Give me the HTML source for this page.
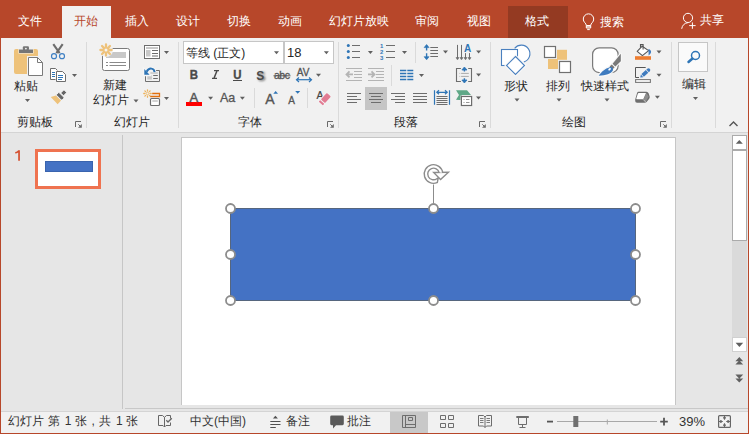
<!DOCTYPE html>
<html><head><meta charset="utf-8">
<style>
*{margin:0;padding:0;box-sizing:border-box}
html,body{width:749px;height:434px;overflow:hidden;background:#E6E6E6;font-family:"Liberation Sans",sans-serif;}
.a{position:absolute}
#top{left:0;top:0;width:749px;height:38px;background:#B7472A}
.tt{position:absolute;top:14px;font-size:12px;line-height:14px;color:#fff;white-space:nowrap}
#ribbon{left:1px;top:38px;width:747px;height:95px;background:#F1F1F1;border-bottom:1px solid #D4D4D4}
.sep{position:absolute;width:1px;background:#DADADA}
.lbl{position:absolute;top:116px;font-size:12px;line-height:13px;color:#262626;font-weight:500;white-space:nowrap}
.txt{position:absolute;font-size:12px;line-height:13px;color:#262626;font-weight:500;white-space:nowrap}
#pane{left:1px;top:133px;width:121px;height:278px;background:#E6E6E6}
#status{left:1px;top:411px;width:747px;height:22px;background:#F1F1F1;border-top:1px solid #D4D4D4}
.st{position:absolute;top:415px;font-size:12px;line-height:13px;color:#333;white-space:nowrap}
svg text{font-family:"Liberation Sans",sans-serif}
</style></head><body>
<div id="top" class="a"></div>
<div class="a" style="left:0;top:38px;width:1px;height:396px;background:#B7472A"></div>
<div class="a" style="left:748px;top:38px;width:1px;height:396px;background:#B7472A"></div>
<div class="a" style="left:0;top:433px;width:749px;height:1px;background:#B7472A"></div>

<div class="a" style="left:62px;top:6px;width:49px;height:32px;background:#F1F1F1"></div>
<div class="a" style="left:508px;top:6px;width:60px;height:32px;background:#943A22"></div>
<div class="tt" style="left:18px">文件</div>
<div class="tt" style="left:74px;color:#B7472A">开始</div>
<div class="tt" style="left:125px">插入</div>
<div class="tt" style="left:176px">设计</div>
<div class="tt" style="left:227px">切换</div>
<div class="tt" style="left:278px">动画</div>
<div class="tt" style="left:329px">幻灯片放映</div>
<div class="tt" style="left:415px">审阅</div>
<div class="tt" style="left:467px">视图</div>
<div class="tt" style="left:525px">格式</div>
<div class="tt" style="left:600px;top:15px">搜索</div>
<div class="tt" style="left:700px;top:13px;font-weight:500">共享</div>

<div id="ribbon" class="a"></div>
<div class="sep" style="left:86px;top:42px;height:86px"></div>
<div class="sep" style="left:178px;top:42px;height:86px"></div>
<div class="sep" style="left:338px;top:42px;height:86px"></div>
<div class="sep" style="left:490px;top:42px;height:86px"></div>
<div class="sep" style="left:671px;top:42px;height:86px"></div>
<div class="sep" style="left:715px;top:42px;height:86px"></div>
<div class="sep" style="left:254px;top:88px;height:20px"></div>
<div class="sep" style="left:307px;top:88px;height:20px"></div>
<div class="sep" style="left:415px;top:42px;height:21px"></div>
<div class="sep" style="left:391px;top:65px;height:21px"></div>

<div class="txt" style="left:14px;top:80px">粘贴</div>
<div class="lbl" style="left:17px">剪贴板</div>
<div class="txt" style="left:103px;top:79px">新建</div>
<div class="txt" style="left:93px;top:94px">幻灯片</div>
<div class="lbl" style="left:114px">幻灯片</div>
<div class="a" style="left:183px;top:41px;width:101px;height:23px;background:#fff;border:1px solid #C6C6C6"></div>
<div class="a" style="left:284px;top:41px;width:50px;height:23px;background:#fff;border:1px solid #C6C6C6"></div>
<div class="txt" style="left:186px;top:47px">等线 (正文)</div>
<div class="txt" style="left:287px;top:46px;font-size:13px;line-height:14px">18</div>
<div class="lbl" style="left:238px">字体</div>
<div class="lbl" style="left:394px">段落</div>
<div class="txt" style="left:504px;top:80px">形状</div>
<div class="txt" style="left:546px;top:80px">排列</div>
<div class="txt" style="left:581px;top:80px">快速样式</div>
<div class="lbl" style="left:562px">绘图</div>
<div class="a" style="left:678px;top:42px;width:30px;height:30px;background:#FAFAFA;border:1px solid #C6C6C6"></div>
<div class="txt" style="left:682px;top:78px">编辑</div>
<div class="a" style="left:365px;top:87px;width:22px;height:23px;background:#C5C5C5"></div>
<svg class="a" style="left:0;top:0" width="749" height="434" viewBox="0 0 749 434"><text x="316.5" y="98.6" font-size="10.5" fill="#444" stroke="#444" stroke-width="0.2">A</text></svg>
<svg class="a" style="left:0;top:0" width="749" height="434" viewBox="0 0 749 434"><rect x="14" y="49" width="24" height="25" rx="2" fill="#EEC27A"/>
<path d="M18.5,49 H33.5 V53.5 H18.5 Z" fill="#F4F4F4"/>
<path d="M19,49.5 H33 V53 H19 Z" fill="#767676"/>
<rect x="22.8" y="46.2" width="6.2" height="4" rx="1.2" fill="#767676"/>
<circle cx="25.9" cy="48.6" r="0.9" fill="#F4F4F4"/>
<path d="M27,56 H38.2 L43.5,61.3 V77 H27 Z" fill="#F1F1F1"/>
<path d="M28.5,57.5 H37.5 L42.5,62.5 V75.5 H28.5 Z" fill="#fff" stroke="#7A7A7A" stroke-width="1"/>
<path d="M37.5,57.5 V62.5 H42.5" fill="none" stroke="#7A7A7A" stroke-width="1"/>
<polygon points="25.0,99.0 30.0,99.0 27.5,102.0" fill="#606060"/>
<path d="M53.3,44.2 L59.6,53.2 M62.7,44.2 L56.4,53.2" stroke="#6D6D6D" stroke-width="2.1"/>
<circle cx="54" cy="56.2" r="2.5" fill="none" stroke="#3F80C4" stroke-width="1.2"/>
<circle cx="62" cy="56.2" r="2.5" fill="none" stroke="#3F80C4" stroke-width="1.2"/>
<path d="M50.5,68.5 H55.5 L57.5,70.5 V79.5 H50.5 Z" fill="#fff" stroke="#6D6D6D" stroke-width="1"/>
<path d="M52,72.5 H55 M52,74.5 H55 M52,76.5 H55" stroke="#2E75B6" stroke-width="1"/>
<path d="M55.5,70.5 H63 L66.5,74 V82.5 H55.5 Z" fill="#F1F1F1"/>
<path d="M56.5,71.5 H62.5 L65.5,74.5 V81.5 H56.5 Z" fill="#fff" stroke="#6D6D6D" stroke-width="1"/>
<path d="M58,75.5 H63 M58,77.5 H63 M58,79.5 H62" stroke="#2E75B6" stroke-width="1"/>
<polygon points="72.0,74.0 77.0,74.0 74.5,77.0" fill="#606060"/>
<g transform="translate(60.2,96.3) rotate(-45)"><polygon points="-2.4,-3.6 -2.4,3.6 -7.4,3.8 -7.2,-6.2" fill="#EEC27A"/><rect x="-1.9" y="-3.9" width="3.8" height="7.8" rx="0.9" fill="#666" stroke="#F6F6F6" stroke-width="0.9"/><rect x="2.7" y="-2" width="4.6" height="4" rx="0.8" fill="#666" stroke="#F6F6F6" stroke-width="0.9"/></g>
<path d="M75.5,127.0 V121.5 H81.0" fill="none" stroke="#6A6A6A" stroke-width="1"/><polygon points="78.0,127.8 81.8,127.8 81.8,124.0" fill="#6A6A6A"/><path d="M78.3,124.3 L80.5,126.5" stroke="#6A6A6A" stroke-width="1"/>
<path d="M327.5,127.0 V121.5 H333.0" fill="none" stroke="#6A6A6A" stroke-width="1"/><polygon points="330.0,127.8 333.8,127.8 333.8,124.0" fill="#6A6A6A"/><path d="M330.3,124.3 L332.5,126.5" stroke="#6A6A6A" stroke-width="1"/>
<path d="M479.5,127.0 V121.5 H485.0" fill="none" stroke="#6A6A6A" stroke-width="1"/><polygon points="482.0,127.8 485.8,127.8 485.8,124.0" fill="#6A6A6A"/><path d="M482.3,124.3 L484.5,126.5" stroke="#6A6A6A" stroke-width="1"/>
<path d="M660.5,127.0 V121.5 H666.0" fill="none" stroke="#6A6A6A" stroke-width="1"/><polygon points="663.0,127.8 666.8,127.8 666.8,124.0" fill="#6A6A6A"/><path d="M663.3,124.3 L665.5,126.5" stroke="#6A6A6A" stroke-width="1"/>
<rect x="102.5" y="48.5" width="27" height="22" rx="2" fill="#fff" stroke="#7A7A7A" stroke-width="1"/>
<rect x="106" y="52" width="20" height="6" fill="#C8C8C8"/>
<path d="M106,62.5 H108 M109.5,62.5 H126 M106,65.5 H108 M109.5,65.5 H126" stroke="#8A8A8A" stroke-width="1"/>
<circle cx="106" cy="50" r="7" fill="#F1F1F1"/>
<path d="M109.00,50.00 L111.60,50.00 M108.12,52.12 L109.96,53.96 M106.00,53.00 L106.00,55.60 M103.88,52.12 L102.04,53.96 M103.00,50.00 L100.40,50.00 M103.88,47.88 L102.04,46.04 M106.00,47.00 L106.00,44.40 M108.12,47.88 L109.96,46.04" stroke="#EEC27A" stroke-width="2.3" stroke-linecap="round"/>
<circle cx="106" cy="50" r="2.6" fill="#EEC27A"/>
<circle cx="106" cy="50" r="1.5" fill="#F4F4F4"/>
<polygon points="133.5,99.5 138.5,99.5 136,102.5" fill="#606060"/>
<rect x="144.5" y="45.5" width="15" height="13" fill="#fff" stroke="#6D6D6D" stroke-width="1"/>
<rect x="146" y="47" width="12" height="2" fill="#C8C8C8"/>
<rect x="146" y="50" width="4.5" height="6.5" fill="#C8C8C8"/>
<path d="M152,50.5 H158 M152,53.5 H158 M152,56 H158" stroke="#6D6D6D" stroke-width="1"/>
<polygon points="164.0,50.9 169.0,50.9 166.5,53.9" fill="#606060"/>
<path d="M155.8,70.5 H159.5 V81.5 H145.5 V75.6" fill="none" stroke="#707070" stroke-width="1"/>
<rect x="147.3" y="75.4" width="4.6" height="4.1" fill="#C8C8C8"/>
<rect x="150.4" y="72.2" width="7.4" height="1.6" fill="#C8C8C8"/>
<path d="M153.2,75.5 H157.8 M153.2,78.5 H157.8" stroke="#6D6D6D" stroke-width="1"/>
<path d="M154.6,72.2 C154.2,68.2 149.2,66.8 146.6,71.8" fill="none" stroke="#F6F6F6" stroke-width="3.6"/>
<path d="M143.5,68.2 V75.6 H150.3 Z" fill="#F6F6F6" stroke="#F6F6F6" stroke-width="1.4"/>
<path d="M154.6,72.2 C154.2,68.2 149.2,66.8 146.6,71.8" fill="none" stroke="#2E75B6" stroke-width="2"/>
<path d="M144.3,69 V74.8 H149.6 Z" fill="#2E75B6"/>
<path d="M150.10,93.50 L151.20,93.50 M149.34,95.34 L150.12,96.12 M147.50,96.10 L147.50,97.20 M145.66,95.34 L144.88,96.12 M144.90,93.50 L143.80,93.50 M145.66,91.66 L144.88,90.88 M147.50,90.90 L147.50,89.80 M149.34,91.66 L150.12,90.88" stroke="#EDB25A" stroke-width="1.3" stroke-linecap="round"/>
<circle cx="147.5" cy="93.5" r="1.3" fill="none" stroke="#EDB25A" stroke-width="0.8"/>
<path d="M152.2,93.5 H159.5 V96.5 H150.2" fill="none" stroke="#E2700E" stroke-width="1.3"/>
<rect x="150.5" y="98.5" width="9" height="7" rx="1" fill="#fff" stroke="#6D6D6D" stroke-width="1.2"/>
<rect x="152.3" y="100.2" width="5.5" height="1.6" fill="#C8C8C8"/>
<polygon points="164.0,97.1 169.0,97.1 166.5,100.1" fill="#606060"/>
<polygon points="274.0,51.2 279.0,51.2 276.5,54.2" fill="#606060"/>
<polygon points="323.9,51.2 328.9,51.2 326.4,54.2" fill="#606060"/>
<polygon points="208.1,96.7 213.1,96.7 210.6,99.7" fill="#606060"/>
<polygon points="239.9,96.7 244.9,96.7 242.4,99.7" fill="#606060"/>
<polygon points="316.0,73.7 321.0,73.7 318.5,76.7" fill="#606060"/>
<rect x="186" y="102" width="16" height="4" fill="#FF0000"/>
<path d="M297,79.7 H311" stroke="#2E75B6" stroke-width="1.2"/>
<path d="M299,77.5 L296.5,79.7 L299,82 M309,77.5 L311.5,79.7 L309,82" fill="none" stroke="#2E75B6" stroke-width="1.2"/>
<polygon points="273.3,93.7 278,93.7 275.65,90.9" fill="#2E75B6"/>
<polygon points="295.2,90.9 300.2,90.9 297.7,93.7" fill="#2E75B6"/>
<g transform="translate(325.9,98) rotate(-47)"><rect x="-4.4" y="-2.8" width="8.8" height="5.6" rx="0.9" fill="#F4F4F4" stroke="#F4F4F4" stroke-width="1.6"/><rect x="-7.5" y="-2.8" width="2.1" height="5.6" rx="0.5" fill="#F4F4F4" stroke="#F4F4F4" stroke-width="1.6"/><rect x="-4.4" y="-2.8" width="8.8" height="5.6" rx="0.9" fill="#E27C93"/><rect x="-7.5" y="-2.8" width="2.1" height="5.6" rx="0.5" fill="#E27C93"/></g>
<circle cx="348.3" cy="45.5" r="1.5" fill="#2E75B6"/>
<path d="M352,45.5 H360" stroke="#6D6D6D" stroke-width="1"/>
<path d="M386,45.5 H395" stroke="#6D6D6D" stroke-width="1"/>
<circle cx="348.3" cy="51.5" r="1.5" fill="#2E75B6"/>
<path d="M352,51.5 H360" stroke="#6D6D6D" stroke-width="1"/>
<path d="M386,51.5 H395" stroke="#6D6D6D" stroke-width="1"/>
<circle cx="348.3" cy="57.5" r="1.5" fill="#2E75B6"/>
<path d="M352,57.5 H360" stroke="#6D6D6D" stroke-width="1"/>
<path d="M386,57.5 H395" stroke="#6D6D6D" stroke-width="1"/>
<polygon points="367.9,50.9 372.9,50.9 370.4,53.9" fill="#606060"/>
<polygon points="402.0,50.9 407.0,50.9 404.5,53.9" fill="#606060"/>
<path d="M426.6,45.5 V50.5 M426.6,53.3 V58.8" stroke="#2E75B6" stroke-width="1.4"/>
<path d="M424.1,47.6 L426.6,44.5 L429.1,47.6 Z M424.1,56.7 L426.6,59.8 L429.1,56.7 Z" fill="#2E75B6" stroke="#2E75B6" stroke-width="0.6" stroke-linejoin="round"/>
<path d="M430.3,47.5 H438 M430.3,50.5 H438 M430.3,53.5 H438 M430.3,56.5 H438" stroke="#6D6D6D" stroke-width="1"/>
<polygon points="443.0,50.4 448.0,50.4 445.5,53.4" fill="#606060"/>
<path d="M457.5,44.9 V58 M461.5,44.9 V58 M465.5,53.1 V58 M469.5,53.1 V58" stroke="#6D6D6D" stroke-width="1"/>
<path d="M456,57.6 L457.5,59.8 L459,57.6 Z M460,57.6 L461.5,59.8 L463,57.6 Z M464,57.6 L465.5,59.8 L467,57.6 Z M468,57.6 L469.5,59.8 L471,57.6 Z" fill="#6D6D6D" stroke="#6D6D6D" stroke-width="0.6"/>
<polygon points="476.1,50.4 481.1,50.4 478.6,53.4" fill="#606060"/>
<path d="M346,68.5 H362 M354,71.5 H362 M354,74.5 H362 M354,77.5 H362 M346,80.5 H362" stroke="#B4B4B4" stroke-width="1"/>
<path d="M346.5,74.4 H353 M349.5,71.4 L346.5,74.4 L349.5,77.4" fill="none" stroke="#B4B4B4" stroke-width="1.8"/>
<path d="M368,68.5 H384 M376,71.5 H384 M376,74.5 H384 M376,77.5 H384 M368,80.5 H384" stroke="#B4B4B4" stroke-width="1"/>
<path d="M368,74.4 H374.5 M371.5,71.4 L374.5,74.4 L371.5,77.4" fill="none" stroke="#B4B4B4" stroke-width="1.8"/>
<path d="M400,70.5 H406.3 M400,73.5 H406.3 M400,76.5 H406.3 M400,79.5 H406.3 M407.3,70.5 H413.3 M407.3,73.5 H413.3 M407.3,76.5 H413.3 M407.3,79.5 H413.3" stroke="#2E75B6" stroke-width="1.3"/>
<polygon points="419.0,73.9 424.0,73.9 421.5,76.9" fill="#606060"/>
<path d="M460.9,68.5 H456.5 V81.5 H460.9 M468.2,68.5 H471.5 V81.5 H468.2" fill="none" stroke="#6D6D6D" stroke-width="1.1"/>
<path d="M459.5,73.4 H460.2 M461.1,73.4 H468.8 M459.5,76.4 H460.2 M461.1,76.4 H468.8" stroke="#ABABAB" stroke-width="1"/>
<path d="M464.4,68 V71.6 M464.4,78.2 V82" stroke="#2E75B6" stroke-width="1.4"/>
<path d="M461.9,70 L464.4,67 L467,70 Z M461.9,80 L464.4,83 L467,80 Z" fill="#2E75B6" stroke="#2E75B6" stroke-width="0.8" stroke-linejoin="round"/>
<polygon points="476.1,73.5 481.1,73.5 478.6,76.5" fill="#606060"/>
<path d="M347,93.5 H361 M347,96.5 H357 M347,99.5 H361 M347,102.5 H357" stroke="#6D6D6D" stroke-width="1"/>
<path d="M369,93.5 H383 M371,96.5 H381 M369,99.5 H383 M371,102.5 H381" stroke="#6D6D6D" stroke-width="1"/>
<path d="M391,93.5 H405 M395,96.5 H405 M391,99.5 H405 M395,102.5 H405" stroke="#6D6D6D" stroke-width="1"/>
<path d="M413,93.5 H427 M413,96.5 H427 M413,99.5 H427 M413,102.5 H427" stroke="#6D6D6D" stroke-width="1"/>
<path d="M434.5,90.2 V104.8 M449.5,90.2 V104.8" stroke="#2E75B6" stroke-width="1.2"/>
<path d="M437,92.3 H447 M439,90.3 L436.8,92.3 L439,94.3 M445,90.3 L447.2,92.3 L445,94.3" fill="none" stroke="#2E75B6" stroke-width="1.2"/>
<path d="M436.5,96.5 H447.5 M436.5,98.5 H447.5 M436.5,100.5 H447.5 M436.5,102.5 H447.5 M436.5,104.5 H447.5" stroke="#6D6D6D" stroke-width="1"/>
<path d="M456,90.2 H467 L471,95 H462 V100 H459.5 L456,99.8 L459,95 Z" fill="#5FA887"/>
<rect x="460.5" y="95.5" width="12" height="11" fill="#F1F1F1"/>
<rect x="461.4" y="96.5" width="10.2" height="9" fill="#fff" stroke="#6D6D6D" stroke-width="1.2"/>
<path d="M463.5,99.5 H464.5 M466,99.5 H469.5 M463.5,102.5 H464.5 M466,102.5 H469.5" stroke="#8A8A8A" stroke-width="0.9"/>
<polygon points="476.0,96.4 481.0,96.4 478.5,99.4" fill="#606060"/>
<circle cx="521.3" cy="53.7" r="8.6" fill="#fff"/><path d="M514.62,48.29 A8.6,8.6 0 1 1 523.81,61.92" fill="none" stroke="#4A80BF" stroke-width="1.1"/>
<rect x="501.5" y="49.5" width="16" height="16" fill="#fff" stroke="#4A80BF" stroke-width="1.1"/>
<path d="M515.5,56.5 L524.5,65.5 L515.5,74.5 L506.5,65.5 Z" fill="#fff" stroke="#F8F8F8" stroke-width="3.2"/><path d="M515.5,56.5 L524.5,65.5 L515.5,74.5 L506.5,65.5 Z" fill="#fff" stroke="#4A80BF" stroke-width="1.1"/>
<polygon points="514.5,98.5 519.5,98.5 517,101.5" fill="#606060"/>
<rect x="557" y="49.8" width="10" height="10" fill="#EEC27A"/>
<rect x="548" y="59" width="10" height="10" fill="#EEC27A"/>
<rect x="544.5" y="46.5" width="11" height="11" fill="#fff" stroke="#707070" stroke-width="1.2"/>
<rect x="559.5" y="61.5" width="11" height="11" fill="#fff" stroke="#707070" stroke-width="1.2"/>
<polygon points="556.5,98.5 561.5,98.5 559,101.5" fill="#606060"/>
<rect x="592.6" y="47.8" width="25.5" height="24.8" rx="6.5" fill="#fff" stroke="#7A7A7A" stroke-width="1.2"/>
<path d="M620.8,53.8 V61.2 L615.3,66.4 L612.6,63.7 Z M611.6,64.6 L614.4,67.4 L612.2,69.6 L609.4,66.8 Z M609.2,67.4 C611.5,66 614,68.5 612.7,70.8 C611,73.5 606,75.5 598.7,75.8 C601.5,71.5 605.5,68.2 609.2,67.4 Z" fill="#F8F8F8" stroke="#F8F8F8" stroke-width="2.2" stroke-linejoin="round"/>
<path d="M620.8,53.8 V61.2 L615.3,66.4 L612.6,63.7 Z" fill="#7A7A7A"/>
<path d="M611.8,64.4 L614.6,67.2 L612.4,69.4 L609.6,66.6 Z" fill="#7A7A7A"/>
<path d="M609.2,67.4 C611.5,66 614,68.5 612.7,70.8 C611,73.5 606,75.5 598.7,75.8 C601.5,71.5 605.5,68.2 609.2,67.4 Z" fill="#3E7BBF"/>
<ellipse cx="609.6" cy="69.3" rx="1.5" ry="1" transform="rotate(-40 609.6 69.3)" fill="#fff"/>
<polygon points="604.5,98.5 609.5,98.5 607,101.5" fill="#606060"/>
<path d="M637.2,51.3 L642.2,46.2 L648.6,50.6 L642.4,55.6 Z" fill="#fff" stroke="#555" stroke-width="1.1" stroke-linejoin="round"/>
<path d="M640.5,47.8 V44.6 H643.1 V49.6" fill="none" stroke="#555" stroke-width="1.1"/>
<path d="M648.4,49 Q651.6,50 651,52.6 Q650.6,54.3 648.6,55.4 Q648.7,52.2 648.4,49 Z" fill="#3E7BBF"/>
<rect x="635" y="56.2" width="16" height="3.6" fill="#ED7D31"/>
<polygon points="656.5,50.6 661.5,50.6 659,53.6" fill="#606060"/>
<path d="M645.7,67.5 H635.5 V77.5 H639" fill="none" stroke="#555" stroke-width="1"/>
<g transform="translate(640.2,77.6) rotate(-42.4)"><path d="M0,0 L2.6,-1.8 V1.8 Z M3.3,-1.8 H9.3 V1.8 H3.3 Z M10,-1.8 H11.2 A1.8,1.8 0 0 1 11.2,1.8 H10 Z" fill="#3E7BBF"/></g>
<rect x="635.6" y="79.6" width="14.8" height="2.8" fill="#fff" stroke="#7A7A7A" stroke-width="1.1"/>
<polygon points="656.5,73.7 661.5,73.7 659,76.7" fill="#606060"/>
<path d="M638.5,91.8 H646.5 Q648,91.8 648.6,93.3 L649.6,96.3 Q650,97.5 649.2,98.7 L646.6,102 Q645.8,102.8 644.6,102.8 H637 Q635.2,102.8 635.2,101 V99.6 L637,93.2 Q637.4,91.8 638.5,91.8 Z" fill="#6E6E6E"/>
<path d="M646.3,93 L648.7,96.5 L645.8,101.8 L643.4,99.4 Z" fill="#8E8E8E"/>
<path d="M638.8,93 H646 L643.2,99.2 H636.8 Q636.1,99.2 636.3,98.5 L637.8,93.8 Q638,93 638.8,93 Z" fill="#fff"/>
<path d="M643.4,99.6 L645.6,102" stroke="#DDD" stroke-width="0.8"/>
<polygon points="654.9,95.8 659.9,95.8 657.4,98.8" fill="#606060"/>
<circle cx="695.5" cy="55.5" r="4" fill="none" stroke="#2E75B6" stroke-width="1.5"/>
<path d="M692.5,58.5 L688.5,62" stroke="#2E75B6" stroke-width="2.5" stroke-linecap="round"/>
<polygon points="693.0,97.0 698.0,97.0 695.5,100.0" fill="#606060"/>
<path d="M729.5,126 L733.5,122 L737.5,126" fill="none" stroke="#555" stroke-width="1.4"/>
<path d="M586.3,25.5 Q586.2,23.8 584.8,22.7 A5.2,5.2 0 1 1 592.2,22.7 Q590.8,23.8 590.7,25.5 Z" fill="none" stroke="#fff" stroke-width="1"/>
<path d="M586.3,25.5 V28 H590.7 V25.5 M586.3,26.8 H590.7" fill="none" stroke="#fff" stroke-width="1"/>
<path d="M587.2,29.6 H589.8" stroke="#fff" stroke-width="1"/>
<circle cx="688" cy="17.9" r="4.6" fill="none" stroke="#fff" stroke-width="1"/>
<path d="M681.7,28.8 Q682.5,23.5 688,22.6" fill="none" stroke="#fff" stroke-width="1"/>
<path d="M689.2,25.6 H695.6 M692.4,22.4 V28.8" stroke="#fff" stroke-width="1"/></svg>
<svg class="a" style="left:0;top:0" width="749" height="434" viewBox="0 0 749 434">
<text x="189.8" y="78.7" font-size="12.3" font-weight="bold" fill="#4A4A4A" stroke="#4A4A4A" stroke-width="0.35" transform="translate(189.8 0) scale(0.93 1) translate(-189.8 0)">B</text>
<path d="M214,70.6 H219 M212,78.4 H217" stroke="#4A4A4A" stroke-width="1.1"/><path d="M216.9,70.9 L214.1,78.1" stroke="#4A4A4A" stroke-width="1.5"/>
<text x="233.2" y="78.7" font-size="12.3" font-weight="bold" fill="#4A4A4A" stroke="#4A4A4A" stroke-width="0.35" transform="translate(233.2 0) scale(0.93 1) translate(-233.2 0)">U</text>
<rect x="233" y="80" width="9" height="1" fill="#4A4A4A"/>

<defs><filter id="sb" x="-50%" y="-50%" width="200%" height="200%"><feGaussianBlur stdDeviation="0.9"/></filter></defs><g transform="translate(256.2,79.6) scale(0.9,1.02)"><text x="1.6" y="1.8" font-size="13.3" font-weight="bold" fill="#666" filter="url(#sb)">S</text><text x="0" y="0" font-size="13.3" font-weight="bold" fill="#4A4A4A">S</text></g>
<text x="274" y="79.1" font-size="10.5" fill="#555" stroke="#555" stroke-width="0.3" letter-spacing="-0.5">abc</text>
<rect x="273.5" y="75.3" width="17" height="1" fill="#555"/>
<text x="296.8" y="75.8" font-size="10" fill="#555" stroke="#555" stroke-width="0.3">AV</text>
<text x="189.5" y="101.6" font-size="13" fill="#555" stroke="#555" stroke-width="0.45">A</text>
<text x="220" y="101.9" font-size="12.5" fill="#555" stroke="#555" stroke-width="0.3">Aa</text>
<text x="265.3" y="103.8" font-size="14" fill="#555" stroke="#555" stroke-width="0.35">A</text>
<text x="288.3" y="103.8" font-size="10" fill="#555" stroke="#555" stroke-width="0.3">A</text>
<text x="380" y="47.5" font-size="6" font-weight="bold" fill="#2E75B6">1</text>
<text x="380" y="53.6" font-size="6" font-weight="bold" fill="#2E75B6">2</text>
<text x="380" y="59.7" font-size="6" font-weight="bold" fill="#2E75B6">3</text>
<text x="464" y="51.7" font-size="10" font-weight="bold" fill="#2E75B6">A</text>
</svg>

<div id="pane" class="a"></div>
<div class="a" style="left:122px;top:135px;width:1px;height:274px;background:#C6C6C6"></div>
<svg class="a" style="left:0;top:0" width="40" height="170"><path d="M18.2,150.2 H19.9 V160.8 H18.2 V152.4 Q16.9,153.2 15.2,153.4 V152.1 Q17.2,151.5 18.2,150.2 Z" fill="#D54F2E"/></svg>
<div class="a" style="left:35px;top:149px;width:66px;height:40px;border:3px solid #EF7350;background:#fff"></div>
<div class="a" style="left:45px;top:161px;width:48px;height:11px;background:#4472C4;border:1px solid #3A64AE"></div>
<div class="a" style="left:125px;top:408px;width:623px;height:1px;background:#C8C8C8"></div>
<div class="a" style="left:181px;top:137px;width:495px;height:268px;background:#fff;border-left:1px solid #C6C6C6;border-top:1px solid #C6C6C6;border-right:1px solid #C6C6C6"></div>

<div class="a" style="left:732px;top:135px;width:15px;height:15px;background:#fff;border:1px solid #ABABAB"></div>
<div class="a" style="left:732px;top:150px;width:15px;height:91px;background:#fff;border:1px solid #ABABAB"></div>
<div class="a" style="left:732px;top:241px;width:15px;height:96px;background:#DADADA"></div>
<div class="a" style="left:732px;top:337px;width:15px;height:15px;background:#fff;border:1px solid #D0D0D0"></div>
<svg class="a" style="left:0;top:0" width="749" height="434" viewBox="0 0 749 434"><rect x="230.5" y="208.5" width="405" height="92" fill="#4472C4" stroke="#56667E" stroke-width="1"/>
<path d="M433.5,184.5 V203" stroke="#8C8C8C" stroke-width="1"/>
<path d="M442.02,172.80 A8.6,8.6 0 1 0 436.72,181.97 L437.23,179.32 A6.5,6.5 0 1 1 439.81,172.43 Z" fill="#fff" stroke="#8C8C8C" stroke-width="2.8" stroke-linejoin="miter"/>
<path d="M435.3,173.2 L446.6,173 L440.6,178.6 Z" fill="#fff" stroke="#8C8C8C" stroke-width="2.8" stroke-linejoin="miter"/>
<path d="M442.02,172.80 A8.6,8.6 0 1 0 436.72,181.97 L437.23,179.32 A6.5,6.5 0 1 1 439.81,172.43 Z" fill="#fff"/>
<path d="M435.3,173.2 L446.6,173 L440.6,178.6 Z" fill="#fff"/>
<circle cx="230.5" cy="208.5" r="4.5" fill="#fff" stroke="#8C8C8C" stroke-width="1.8"/>
<circle cx="433.5" cy="208.5" r="4.5" fill="#fff" stroke="#8C8C8C" stroke-width="1.8"/>
<circle cx="635.5" cy="208.5" r="4.5" fill="#fff" stroke="#8C8C8C" stroke-width="1.8"/>
<circle cx="230.5" cy="254.5" r="4.5" fill="#fff" stroke="#8C8C8C" stroke-width="1.8"/>
<circle cx="635.5" cy="254.5" r="4.5" fill="#fff" stroke="#8C8C8C" stroke-width="1.8"/>
<circle cx="230.5" cy="300.5" r="4.5" fill="#fff" stroke="#8C8C8C" stroke-width="1.8"/>
<circle cx="433.5" cy="300.5" r="4.5" fill="#fff" stroke="#8C8C8C" stroke-width="1.8"/>
<circle cx="635.5" cy="300.5" r="4.5" fill="#fff" stroke="#8C8C8C" stroke-width="1.8"/>
<polygon points="735.8,143.7 742.8,143.7 739.3,140" fill="#606060"/>
<polygon points="735.6,342.8 743.2,342.8 739.4,347" fill="#606060"/>
<path d="M735.4,361.2 L739.3,357 L743.2,361.2 Z M735.4,364.6 L739.3,360.4 L743.2,364.6 Z" fill="#606060"/>
<path d="M735.4,374.6 L739.3,378.8 L743.2,374.6 Z M735.4,378.4 L739.3,382.6 L743.2,378.4 Z" fill="#606060"/></svg>

<div id="status" class="a"></div>
<div class="st" style="left:8px">幻灯片</div><div class="st" style="left:47.5px">第</div><div class="st" style="left:64.8px">1</div><div class="st" style="left:74.8px">张</div><div class="st" style="left:91.5px">,</div><div class="st" style="left:98.5px">共</div><div class="st" style="left:116px">1</div><div class="st" style="left:125.8px">张</div>
<div class="st" style="left:190px">中文(中国)</div>
<div class="st" style="left:286px;font-weight:500">备注</div>
<div class="st" style="left:347px;font-weight:500">批注</div>
<div class="a" style="left:390px;top:412px;width:38px;height:21px;background:#C8C8C8"></div>
<div class="st" style="left:679px;top:414px;font-size:13px;line-height:15px">39%</div>
<svg class="a" style="left:0;top:0" width="749" height="434" viewBox="0 0 749 434"><path d="M170.5,418.5 V415.5 H166.5 L164.5,417.3 L162.5,415.5 H158.5 V425.5 H163 L164.5,427 L166,425.5 H170.5 V422.5 M164.5,417.3 V427" fill="none" stroke="#666" stroke-width="1"/>
<path d="M166.3,420.3 L168,422 L171.8,418.2" fill="none" stroke="#666" stroke-width="1.3"/>
<polygon points="272.9,418.4 277.9,418.4 275.4,415.8" fill="#505050"/>
<path d="M270.3,421.5 H280.5 M270.3,424.5 H280.5 M270.3,427.5 H275.8" stroke="#505050" stroke-width="1"/>
<path d="M331.5,415.6 H342.5 Q343.8,415.6 343.8,417 V423.8 Q343.8,425.2 342.5,425.2 H336 L333,428.4 V425.2 H331.5 Q330.2,425.2 330.2,423.8 V417 Q330.2,415.6 331.5,415.6 Z" fill="#5A5A5A"/>
<path d="M402.5,415.5 H415.5 V427.5 H402.5 Z M405.5,415.5 V427.5 M405.5,424.5 H415.5 M408.5,417.5 H412.5 V420.5 H408.5 Z" fill="none" stroke="#6D6D6D" stroke-width="1"/>
<path d="M440.5,415.5 H445.5 V419.5 H440.5 Z M448.5,415.5 H453.5 V419.5 H448.5 Z M440.5,423.5 H445.5 V427.5 H440.5 Z M448.5,423.5 H453.5 V427.5 H448.5 Z" fill="none" stroke="#6D6D6D" stroke-width="1"/>
<path d="M478.5,415.5 H483.5 L485,417 L486.5,415.5 H491.5 V426 H486.5 L485,427.5 L483.5,426 H478.5 Z M485,417 V427.5" fill="none" stroke="#6D6D6D" stroke-width="1"/>
<path d="M480,418.5 H483.5 M480,420.5 H483.5 M480,422.5 H483.5 M486.5,418.5 H490 M486.5,420.5 H490 M486.5,422.5 H490" stroke="#6D6D6D" stroke-width="0.9"/>
<path d="M516.3,417 H528.8" stroke="#6D6D6D" stroke-width="2"/>
<path d="M518.5,418 V424.5 H526.5 V418 M522.5,424.5 V427 M519.5,427.5 H525.5" fill="none" stroke="#6D6D6D" stroke-width="1"/>
<path d="M547,421.6 H553" stroke="#555" stroke-width="1.8"/>
<path d="M557,421.5 H657" stroke="#A8A8A8" stroke-width="1"/>
<path d="M607.3,419.5 V424.5" stroke="#A8A8A8" stroke-width="1"/>
<rect x="573.3" y="416" width="5" height="11" fill="#707070"/>
<path d="M660.2,421.6 H667.8 M664,417.8 V425.4" stroke="#555" stroke-width="1.8"/>
<rect x="718.6" y="415.6" width="11.8" height="11.8" rx="1" fill="none" stroke="#666" stroke-width="1.2"/>
<path d="M724.5,416 V419.8 M724.5,423.2 V427 M719,421.5 H722.8 M726.2,421.5 H730" stroke="#666" stroke-width="1.1"/>
<path d="M723,417.9 H726 M723,425.1 H726 M720.9,420 V423 M728.1,420 V423" stroke="#666" stroke-width="1.4"/></svg>
</body></html>
